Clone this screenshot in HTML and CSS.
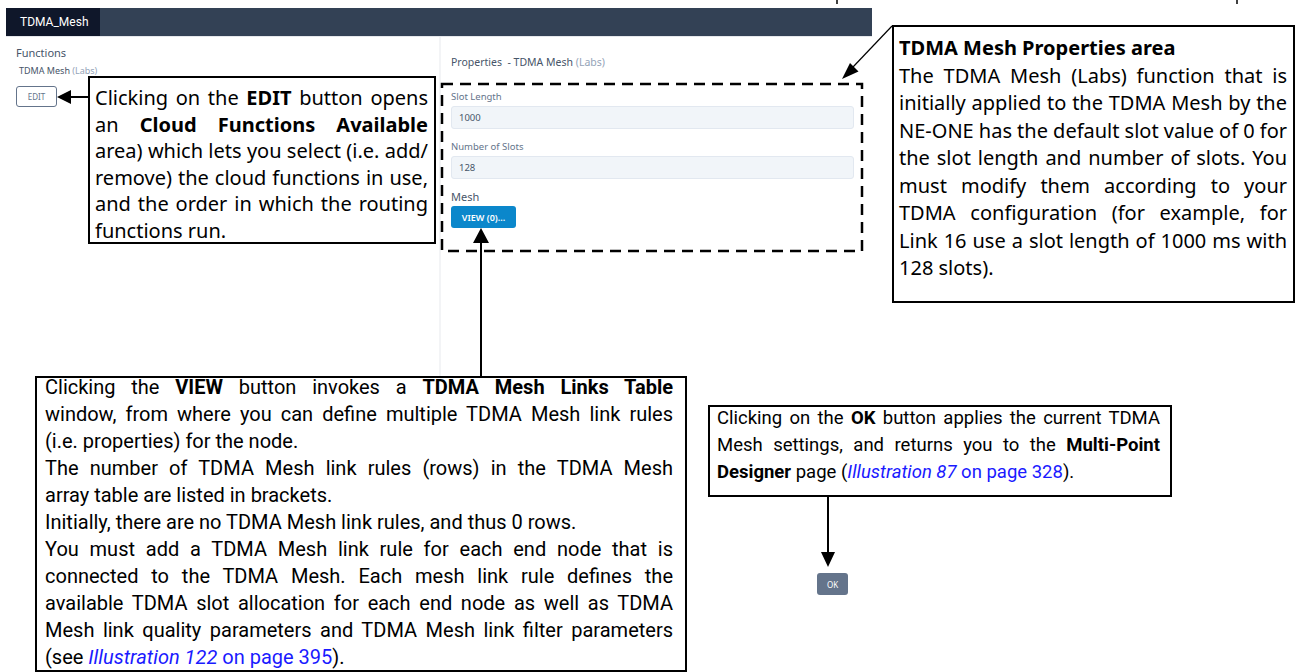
FILE: index.html
```html
<!DOCTYPE html>
<html lang="en">
  <head>
    <meta charset="UTF-8" />
    <title>TDMA_Mesh</title>
    <link rel="stylesheet" href="styles.css">
  </head>
  <body>
    <div class="app">
      <div class="topbar">
        <div class="tab">TDMA_Mesh</div>
      </div>

      <div class="panes">
        <div class="pane-left">
          <div class="pane-title">Functions</div>
          <div class="fn-name">TDMA Mesh <span class="muted">(Labs)</span></div>
          <button class="btn-edit">EDIT</button>
        </div>

        <div class="pane-right">
          <div class="pane-title">Properties &nbsp;- TDMA Mesh <span class="muted">(Labs)</span></div>

          <div class="field">
            <label for="slot-length">Slot Length</label>
            <input type="text" id="slot-length" value="1000" />
          </div>

          <div class="field">
            <label for="slot-count">Number of Slots</label>
            <input type="text" id="slot-count" value="128" />
          </div>

          <div class="field mesh">
            <label>Mesh</label>
            <button class="btn-view">VIEW (0)...</button>
          </div>
        </div>
      </div>

      <div class="footer">
        <button class="btn-ok">OK</button>
      </div>
    </div>

    <!-- callouts -->
    <div class="note note-edit">
      <span class="ln">Clicking on the <b>EDIT</b> button opens</span>
      <span class="ln">an <b>Cloud Functions Available</b></span>
      <span class="ln">area) which lets you select (i.e. add/</span>
      <span class="ln">remove) the cloud functions in use,</span>
      <span class="ln">and the order in which the routing</span>
      <span class="ln end">functions run.</span>
    </div>

    <div class="note note-props">
      <span class="ln end"><b>TDMA Mesh Properties area</b></span>
      <span class="ln">The TDMA Mesh (Labs) function that is</span>
      <span class="ln">initially applied to the TDMA Mesh by the</span>
      <span class="ln tight">NE-ONE has the default slot value of 0 for</span>
      <span class="ln">the slot length and number of slots. You</span>
      <span class="ln">must modify them according to your</span>
      <span class="ln">TDMA configuration (for example, for</span>
      <span class="ln">Link 16 use a slot length of 1000 ms with</span>
      <span class="ln end">128 slots).</span>
    </div>

    <div class="note note-view">
      <div class="lines">
        <span class="ln">Clicking the <b>VIEW</b> button invokes a <b>TDMA Mesh Links Table</b></span>
        <span class="ln">window, from where you can define multiple TDMA Mesh link rules</span>
        <span class="ln end">(i.e. properties) for the node.</span>
        <span class="ln">The number of TDMA Mesh link rules (rows) in the TDMA Mesh</span>
        <span class="ln end">array table are listed in brackets.</span>
        <span class="ln end">Initially, there are no TDMA Mesh link rules, and thus 0 rows.</span>
        <span class="ln">You must add a TDMA Mesh link rule for each end node that is</span>
        <span class="ln">connected to the TDMA Mesh. Each mesh link rule defines the</span>
        <span class="ln">available TDMA slot allocation for each end node as well as TDMA</span>
        <span class="ln">Mesh link quality parameters and TDMA Mesh link filter parameters</span>
        <span class="ln end">(see <a class="ref"><i>Illustration 122</i> on page 395</a>).</span>
      </div>
    </div>

    <div class="note note-ok">
      <div class="lines">
        <span class="ln">Clicking on the <b>OK</b> button applies the current TDMA</span>
        <span class="ln">Mesh settings, and returns you to the <b>Multi-Point</b></span>
        <span class="ln end"><b>Designer</b> page (<a class="ref"><i>Illustration 87</i> on page 328</a>).</span>
      </div>
    </div>

    <!-- arrows and the dashed frame -->
    <svg class="marks" width="1297" height="672" viewBox="0 0 1297 672">
      <line x1="837" y1="0" x2="837" y2="4" stroke="#000" stroke-width="1.5" />
      <line x1="1237" y1="0" x2="1237" y2="4" stroke="#000" stroke-width="1.5" />

      <rect x="442" y="84" width="420" height="167" fill="none" stroke="#000" stroke-width="2.5" stroke-dasharray="11 7" />

      <line x1="88" y1="97" x2="70" y2="97" stroke="#000" stroke-width="2" />
      <polygon points="57,97 71,90 71,104" fill="#000" />

      <line x1="481" y1="376" x2="481" y2="240" stroke="#000" stroke-width="2" />
      <polygon points="481,228 473,243 489,243" fill="#000" />

      <line x1="892" y1="26" x2="853" y2="67" stroke="#000" stroke-width="1.2" />
      <polygon points="842,79 858.5,71.5 850,63" fill="#000" />

      <line x1="828" y1="497" x2="828" y2="555" stroke="#000" stroke-width="2" />
      <polygon points="828,567 821,552 835,552" fill="#000" />
    </svg>
  </body>
</html>
```

FILE: styles.css
```css
/* General */
body {
  margin: 0;
  width: 1297px;
  height: 672px;
  overflow: hidden;
  position: relative;
  background: #ffffff;
  font-family: "Noto Sans", sans-serif;
  color: #475569;
}

/* App window */
.app {
  width: 866px;
  margin-left: 6px;
  padding-top: 8px;
}

.topbar {
  display: flex;
  height: 28px;
  background: #334155;
  border-bottom: 1px solid #e5e7eb;
}

.tab {
  width: 94px;
  box-sizing: border-box;
  padding-left: 14px;
  background: #0f172a;
  color: #ffffff;
  font-family: Roboto, sans-serif;
  font-size: 12px;
  line-height: 28px;
}

.panes {
  display: flex;
  height: 528px;
}

.pane-left {
  width: 435px;
  box-sizing: border-box;
  padding: 9px 10px;
  border-right: 2px solid #f3f4f6;
}

.pane-right {
  flex: 1;
  padding: 18px 18px 0 10px;
}

.pane-title {
  font-size: 10.5px;
  line-height: 14px;
  color: #475569;
}

.pane-left .pane-title {
  font-size: 11px;
}

.muted {
  color: #94a3b8;
}

.fn-name {
  margin-top: 5px;
  padding-left: 3px;
  font-size: 9px;
  line-height: 12px;
}

/* Buttons */
button {
  display: block;
  border: none;
  border-radius: 3px;
  font-family: "Noto Sans", sans-serif;
  padding: 0;
  cursor: pointer;
}

.btn-edit {
  margin-top: 9px;
  width: 41px;
  height: 21px;
  background: #ffffff;
  border: 1px solid #64748b;
  color: #64748b;
  font-size: 8px;
}

.btn-view {
  width: 65px;
  height: 22px;
  background: #0b87cb;
  color: #ffffff;
  font-size: 9px;
  font-weight: 600;
}

.btn-ok {
  width: 31px;
  height: 22px;
  background: #64748b;
  color: #ffffff;
  font-size: 8px;
}

/* Fields */
.field {
  margin-top: 12px;
}

.pane-title + .field {
  margin-top: 22px;
}

.field label {
  display: block;
  margin-bottom: 3px;
  font-size: 9.5px;
  line-height: 12px;
  color: #64748b;
}

.field input {
  display: block;
  width: 100%;
  height: 23px;
  box-sizing: border-box;
  padding: 0 7px;
  background: #f1f5f9;
  border: 1px solid #e2e8f0;
  border-radius: 3px;
  font-family: "Noto Sans", sans-serif;
  font-size: 9.5px;
  color: #475569;
}

.field.mesh {
  margin-top: 11px;
}

.field.mesh label {
  font-size: 11px;
  line-height: 13px;
  color: #475569;
}

.footer {
  display: flex;
  justify-content: flex-end;
  padding: 8px 24px 0 0;
}

/* Callouts */
.note {
  position: absolute;
  box-sizing: border-box;
  border: 2px solid #000000;
  background: #ffffff;
  color: #000000;
}

.ln {
  display: block;
  text-align: justify;
  text-align-last: justify;
}

.ln.end {
  text-align-last: left;
}

.ln.tight {
  word-spacing: -2px;
}

.note-edit {
  left: 88px;
  top: 76px;
  width: 348px;
  height: 168px;
  padding: 7px 6px 0 5px;
  font-size: 20px;
  line-height: 26.5px;
}

.note-props {
  left: 892px;
  top: 25px;
  width: 403px;
  height: 278px;
  padding: 7px 6px 0 5px;
  font-size: 20px;
  line-height: 27.5px;
}

.note-view {
  left: 35px;
  top: 376px;
  width: 652px;
  height: 296px;
  padding: 0 12px 0 8px;
  font-family: Roboto, sans-serif;
  font-size: 20px;
  line-height: 27px;
}

.note-ok {
  left: 708px;
  top: 405px;
  width: 464px;
  height: 92px;
  padding: 0 10px 0 7px;
  font-family: Roboto, sans-serif;
  font-size: 18.5px;
  line-height: 27px;
}

.lines {
  margin-top: -4px;
}

.note-ok .lines {
  margin-top: -2px;
}

.ref {
  color: #1a1aff;
}

.marks {
  position: absolute;
  left: 0;
  top: 0;
  pointer-events: none;
}
```
